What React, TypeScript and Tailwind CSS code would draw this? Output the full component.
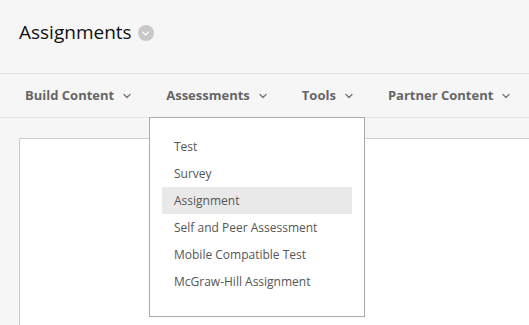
import { ChevronDown } from 'lucide-react';

const navItems = ['Build Content', 'Assessments', 'Tools', 'Partner Content'];

const menuItems = [
  'Test',
  'Survey',
  'Assignment',
  'Self and Peer Assessment',
  'Mobile Compatible Test',
  'McGraw-Hill Assignment',
];

const App = () => {
  return (
    <div className="relative flex flex-col h-[325px] w-full overflow-hidden bg-[#f6f6f6] font-['Open_Sans',sans-serif]">
      {/* Page title */}
      <div className="flex items-center h-[74px] px-[19px] pb-[9px] border-b border-[#e2e2e2]">
        <h1 className="text-[19px] text-[#111] leading-none">Assignments</h1>
        <span className="ml-[6px] mt-[2px] flex items-center justify-center w-[16px] h-[16px] rounded-full bg-[#c9c9c9]">
          <ChevronDown className="w-[11px] h-[11px] text-white" strokeWidth={3} />
        </span>
      </div>

      {/* Action bar */}
      <div className="flex items-center h-[44px] pl-[25px] gap-[33px] border-b border-[#e2e2e2] whitespace-nowrap">
        {navItems.map((item) => (
          <div key={item} className="flex shrink-0 items-center text-[13px] font-bold text-[#666]">
            <span>{item}</span>
            <ChevronDown className="ml-[7px] w-[12px] h-[12px] text-[#777]" strokeWidth={2.75} />
          </div>
        ))}
      </div>

      {/* Content area */}
      <div className="flex flex-1 pt-[20px] pl-[19px]">
        <div className="flex-1 bg-white border-t border-l border-[#cdcdcd]" />
      </div>

      {/* Assessments dropdown */}
      <div className="absolute left-[149px] top-[117px] w-[216px] h-[200px] bg-white border border-[#a9a9a9] px-[12px] pt-[15px]">
        <ul>
          {menuItems.map((item) => (
            <li
              key={item}
              className={`h-[27px] flex items-center pl-[12px] text-[12px] text-[#555] whitespace-nowrap ${
                item === 'Assignment' ? 'bg-[#e9e9e9]' : ''
              }`}
            >
              {item}
            </li>
          ))}
        </ul>
      </div>
    </div>
  );
};

export default App;
